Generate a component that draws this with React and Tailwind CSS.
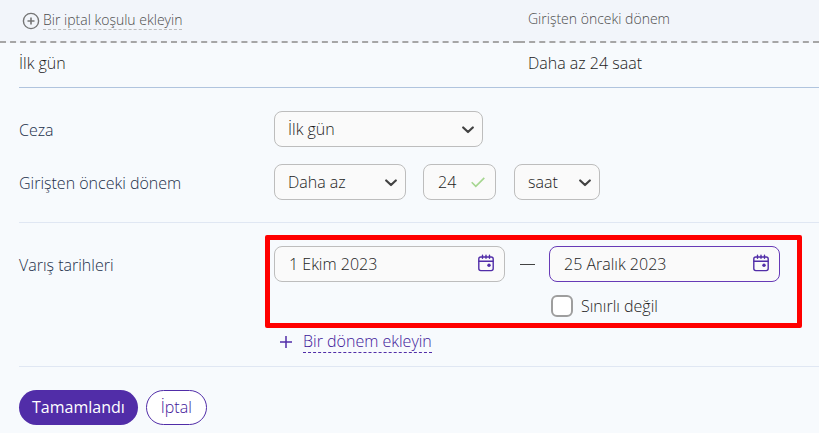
// src/App.jsx

import React from 'react';
import clsx from 'clsx';

const CalendarIcon = () => (
  <svg
    width="18"
    height="18"
    viewBox="0 0 18 18"
    fill="none"
    stroke="currentColor"
    strokeWidth="1.4"
    strokeLinecap="round"
    className="pointer-events-none absolute right-2.5 top-2 text-[#512da8]"
    aria-hidden="true"
  >
    <rect x="1.8" y="3" width="14.4" height="13.6" rx="2" />
    <path d="M2 7.2h14M5.5 1.2v3M9 1.2v3M12.5 1.2v3" />
    <circle cx="12" cy="11.2" r="1.7" fill="currentColor" stroke="none" />
  </svg>
);

const Select = ({ id, label, value, className }) => (
  <div className={clsx('relative', className)}>
    <select
      id={id}
      aria-label={label}
      defaultValue={value}
      className="block h-9 w-full appearance-none rounded-lg border border-[#bdbdbd] bg-[#fafafa] px-[13px] outline-none"
    >
      <option>{value}</option>
    </select>
    <svg
      width="12"
      height="8"
      viewBox="0 0 12 8"
      fill="none"
      stroke="#424242"
      strokeWidth="2.2"
      strokeLinecap="round"
      strokeLinejoin="round"
      className="pointer-events-none absolute right-[9px] top-[15px]"
      aria-hidden="true"
    >
      <path d="M1.2 1.5 6 6l4.8-4.5" />
    </svg>
  </div>
);

const DateInput = ({ id, label, value, active }) => (
  <div className="relative w-[231px]">
    <input
      id={id}
      type="text"
      aria-label={label}
      defaultValue={value}
      className={clsx(
        'block h-9 w-full rounded-lg border bg-[#fafafa] pl-[14px] pr-9 outline-none',
        active ? 'border-[#673ab7]' : 'border-[#bdbdbd]'
      )}
    />
    <CalendarIcon />
  </div>
);

const App = () => {
  return (
    <div className="min-h-screen bg-[#f7fafd] font-['Open_Sans',sans-serif] text-base font-light text-[#1c1c1c]">
      <table className="w-full table-fixed border-separate border-spacing-0 text-left">
        <colgroup>
          <col className="w-[519px]" />
          <col />
        </colgroup>
        <thead className="bg-[#f2f5fa] text-sm text-[#4c4c4c]">
          <tr>
            <th className="h-[43px] border-b-2 border-dashed border-[#a6a6a6] py-0 pl-[22px] font-light">
              <button type="button" className="flex items-center gap-[3px]">
                <svg width="18" height="18" viewBox="0 0 18 18" fill="none" stroke="#757575" strokeWidth="1.4" aria-hidden="true">
                  <circle cx="9" cy="9" r="7.6" />
                  <path d="M9 5.5v7M5.5 9h7" strokeWidth="1.6" />
                </svg>
                <span className="border-b border-dashed border-[#bdbdbd] leading-[18px]">Bir iptal koşulu ekleyin</span>
              </button>
            </th>
            <th className="h-[43px] border-b-2 border-dashed border-[#a6a6a6] py-0 pb-1 pl-[9px] font-light">
              Girişten önceki dönem
            </th>
          </tr>
        </thead>
        <tbody>
          <tr>
            <td className="h-11 py-0 pb-1 pl-[19px]">İlk gün</td>
            <td className="h-11 py-0 pb-1 pl-[9px]">Daha az 24 saat</td>
          </tr>
        </tbody>
      </table>

      <form className="ml-[19px] border-t border-[#b0c4de]" onSubmit={(e) => e.preventDefault()}>
        <div className="grid grid-cols-[255px_1fr] items-center gap-y-[17px] pt-[23px] pb-[22px]">
          <label htmlFor="penalty" className="pt-0.5 text-[#222f4a]">Ceza</label>
          <Select id="penalty" value="İlk gün" className="w-[209px]" />

          <label htmlFor="period" className="pt-0.5 text-[#222f4a]">Girişten önceki dönem</label>
          <div className="flex">
            <Select id="period" value="Daha az" className="w-[132px]" />
            <div className="relative ml-[17px] w-[73px]">
              <input
                type="text"
                aria-label="24 saat"
                defaultValue="24"
                className="block h-9 w-full rounded-lg border border-[#bdbdbd] bg-[#fafafa] pl-[14px] pr-7 outline-none"
              />
              <svg
                width="14"
                height="11"
                viewBox="0 0 14 11"
                fill="none"
                stroke="#a5d68f"
                strokeWidth="1.6"
                className="pointer-events-none absolute right-[11px] top-[13px]"
                aria-hidden="true"
              >
                <path d="M.7 5.3 4.8 9.4 13.3.9" />
              </svg>
            </div>
            <Select id="unit" label="saat" value="saat" className="ml-[18px] w-[86px]" />
          </div>
        </div>

        <div className="grid grid-cols-[255px_1fr] items-start border-y border-[#e0e7f3] pt-[23px] pb-[13px]">
          <label htmlFor="date-from" className="leading-[38px] text-[#222f4a]">Varış tarihleri</label>
          <div>
            <div className="relative w-[506px]">
              <div className="flex items-center justify-between">
                <DateInput id="date-from" value="1 Ekim 2023" />
                <span className="h-px w-[15px] bg-[#424242]" />
                <DateInput id="date-to" label="Varış tarihleri" value="25 Aralık 2023" active />
              </div>
              <label className="ml-[277px] mt-3 flex h-6 items-center gap-2">
                <input
                  type="checkbox"
                  className="size-[22px] appearance-none rounded-md border-2 border-[#9e9e9e] bg-white checked:bg-[#512da8]"
                />
                Sınırlı değil
              </label>
              <div className="pointer-events-none absolute -top-[11px] -right-[22px] -bottom-[10px] -left-[9px] rounded-xs border-5 border-[#ff0000]" />
            </div>
            <button type="button" className="mt-3 ml-1.5 flex items-center gap-[11px] text-[#3d1699]">
              <svg width="12" height="12" viewBox="0 0 12 12" fill="none" stroke="#512da8" strokeWidth="1.5" aria-hidden="true">
                <path d="M6 0v12M0 6h12" />
              </svg>
              <span className="border-b border-dashed border-[#512da8] leading-[22px]">Bir dönem ekleyin</span>
            </button>
          </div>
        </div>

        <div className="flex gap-2 py-[23px]">
          <button type="submit" className="h-[35px] rounded-full bg-[#512da8] px-[13px] pb-0.5 font-normal text-white">
            Tamamlandı
          </button>
          <button type="button" className="h-[35px] rounded-full border border-[#512da8] bg-white px-[14px] pb-0.5 text-[#3d1699]">
            İptal
          </button>
        </div>
      </form>
    </div>
  );
};

export default App;
